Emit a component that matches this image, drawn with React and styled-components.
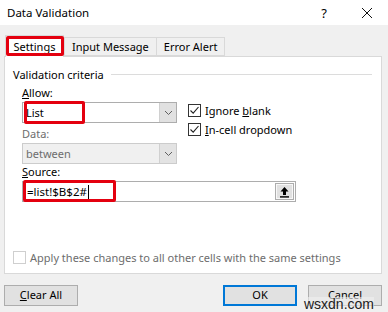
import React from 'react';
import styled, { createGlobalStyle } from 'styled-components';

const GlobalStyle = createGlobalStyle`
    body {
        margin: 0;
        font-family: "Noto Sans", "Open Sans", sans-serif;
        font-size: 11px;
        color: #000;
    }
`

function Chevron(){
    return(
        <svg width="9" height="6" viewBox="0 0 9 6">
            <path d="M1 1 L4.5 4.5 L8 1" fill="none" stroke="#606060" strokeWidth="1"/>
        </svg>
    )
}

function Tick(){
    return(
        <svg width="11" height="11" viewBox="0 0 11 11">
            <path d="M1.5 5.5 L4.2 8.2 L9.5 2" fill="none" stroke="#222" strokeWidth="1.1"/>
        </svg>
    )
}

function Check(props){
    return(
        <CheckRow disabled={props.disabled}>
            <Box disabled={props.disabled}>{props.checked && <Tick/>}</Box>
            <span>{props.children}</span>
        </CheckRow>
    )
}

function Select(props){
    return(
        <SelectBox disabled={props.disabled}>
            <SelectText>{props.value}</SelectText>
            <DropButton disabled={props.disabled}><Chevron/></DropButton>
            {props.marked && <Mark/>}
        </SelectBox>
    )
}

export default class App extends React.Component
{
    render()
    {
        return(
            <Window>
            <GlobalStyle/>

            <TitleBar>
                <Title>Data Validation</Title>
                <Help>?</Help>
                <Close>
                    <svg width="12" height="12" viewBox="0 0 12 12">
                        <path d="M1 1 L11 11 M11 1 L1 11" stroke="#111" strokeWidth="1"/>
                    </svg>
                </Close>
            </TitleBar>

            <TabRow>
                <Tab selected>Settings<TabMark/></Tab>
                <Tab>Input Message</Tab>
                <Tab>Error Alert</Tab>
            </TabRow>

            <Panel>
                <GroupHeader>Validation criteria</GroupHeader>

                <Criteria>
                    <Label><u>A</u>llow:</Label>
                    <Select value="List" marked/>
                    <Label disabled>Data:</Label>
                    <Select value="between" disabled/>

                    <Options>
                        <Check checked>Ignore <u>b</u>lank</Check>
                        <Check checked><u>I</u>n-cell dropdown</Check>
                    </Options>
                </Criteria>

                <Label><u>S</u>ource:</Label>
                <SourceBox>
                    <SourceText>=list!$B$2#<Caret/></SourceText>
                    <Mark wide/>
                    <PickButton>
                        <svg width="11" height="12" viewBox="0 0 11 12">
                            <path d="M5.5 1 L1.5 5.5 H4 V9 H7 V5.5 H9.5 Z" fill="#000"/>
                            <rect x="1" y="10.2" width="9" height="1.4" fill="#000"/>
                        </svg>
                    </PickButton>
                </SourceBox>

                <ApplyRow>
                    <Check disabled>Apply these changes to all other cells with the same settings</Check>
                </ApplyRow>
            </Panel>

            <Footer>
                <Button><u>C</u>lear All</Button>
                <Spacer/>
                <Button primary>OK</Button>
                <Button>Cancel</Button>
            </Footer>

            <Watermark>wsxdn.com</Watermark>
            </Window>
        )
    }
}

const Window = styled.div`
    position: relative;
    width: 388px;
    height: 312px;
    background: #f0f0f0;
    display: flex;
    flex-direction: column;
    overflow: hidden;
`

const TitleBar = styled.div`
    height: 25px;
    background: #fff;
    display: flex;
    align-items: center;
    padding-left: 7px;
`

const Title = styled.div`
    flex: 1;
    font-size: 11.5px;
`

const Help = styled.div`
    width: 14px;
    font-size: 13px;
    text-align: center;
    margin-right: 30px;
`

const Close = styled.div`
    width: 12px;
    height: 12px;
    margin-right: 15px;
    display: flex;
`

const TabRow = styled.div`
    display: flex;
    align-items: flex-end;
    height: 22px;
    margin-top: 9px;
    padding-left: 5px;
    position: relative;
    z-index: 1;
`

const Tab = styled.div`
    position: relative;
    height: ${p => p.selected ? '22px' : '19px'};
    width: ${p => p.selected ? '59px' : 'auto'};
    padding: 0 ${p => p.selected ? '0' : '7px'};
    justify-content: center;
    display: flex;
    align-items: center;
    box-sizing: border-box;
    background: ${p => p.selected ? '#fff' : '#f0f0f0'};
    border: 1px solid #d9d9d9;
    border-bottom: ${p => p.selected ? 'none' : '1px solid #d9d9d9'};
    margin-right: ${p => p.selected ? '0' : '-1px'};
    margin-bottom: ${p => p.selected ? '-1px' : '0'};
`

const Mark = styled.div`
    position: absolute;
    left: ${p => p.wide ? '0' : '1px'};
    top: -2px;
    width: ${p => p.wide ? '93px' : '61px'};
    height: ${p => p.wide ? '22px' : '23px'};
    box-sizing: border-box;
    border: 3px solid #e4000f;
    border-radius: 2px;
    pointer-events: none;
`

const TabMark = styled(Mark)`
    left: 0;
    top: 0;
    width: 58px;
    height: 20px;
`

const Panel = styled.div`
    position: relative;
    height: 218px;
    margin: 0 6px 0 4px;
    background: #fff;
    border: 1px solid #d9d9d9;
    box-sizing: border-box;
    padding: 9px 0 0 17px;
    display: flex;
    flex-direction: column;
`

const GroupHeader = styled.div`
    display: flex;
    align-items: center;
    height: 16px;
    margin-left: -9px;
    margin-right: 9px;
    &::after{
        content: "";
        flex: 1;
        height: 1px;
        background: #dcdcdc;
        margin-left: 7px;
    }
`

const Criteria = styled.div`
    display: grid;
    grid-template-columns: 155px 1fr;
    column-gap: 11px;
    margin-top: 3px;
`

const Label = styled.div`
    grid-column: 1;
    height: 16px;
    line-height: 16px;
    margin-bottom: 1px;
    margin-top: ${p => p.disabled ? '3px' : '0'};
    color: ${p => p.disabled ? '#6d6d6d' : '#000'};
    & + & { margin-top: 3px; }
`

const SelectBox = styled.div`
    grid-column: 1;
    position: relative;
    height: 21px;
    box-sizing: border-box;
    display: flex;
    background: ${p => p.disabled ? '#f0f0f0' : '#fff'};
    border: 1px solid ${p => p.disabled ? '#cccccc' : '#adadad'};
    color: ${p => p.disabled ? '#6d6d6d' : '#000'};
`

const SelectText = styled.div`
    flex: 1;
    padding-left: 3px;
    line-height: 19px;
`

const DropButton = styled.div`
    width: 16px;
    display: flex;
    align-items: center;
    justify-content: center;
    background: ${p => p.disabled ? '#e3e3e3' : '#e1e1e1'};
    border-left: 1px solid #d0d0d0;
`

const Options = styled.div`
    grid-column: 2;
    grid-row: 2 / span 3;
    align-self: start;
    margin-top: -1px;
`

const CheckRow = styled.div`
    display: flex;
    align-items: center;
    height: 19px;
    gap: 4px;
    color: ${p => p.disabled ? '#6d6d6d' : '#000'};
`

const Box = styled.div`
    width: 13px;
    height: 13px;
    box-sizing: border-box;
    border: 1px solid ${p => p.disabled ? '#cfcfcf' : '#333'};
    background: #fff;
    display: flex;
    align-items: center;
    justify-content: center;
`

const SourceBox = styled.div`
    position: relative;
    width: 274px;
    height: 21px;
    box-sizing: border-box;
    border: 1px solid #adadad;
    display: flex;
    align-items: center;
`

const SourceText = styled.div`
    flex: 1;
    padding-left: 4px;
    display: flex;
    align-items: center;
    font-size: 11.5px;
`

const Caret = styled.span`
    display: inline-block;
    width: 1px;
    height: 14px;
    background: #000;
    margin-left: 1px;
`

const PickButton = styled.div`
    width: 19px;
    height: 17px;
    margin-right: 1px;
    box-sizing: border-box;
    border: 1px solid #adadad;
    box-shadow: inset 0 0 0 1px #f8f8f8;
    background: #e1e1e1;
    display: flex;
    align-items: center;
    justify-content: center;
`

const ApplyRow = styled.div`
    margin-top: 46px;
    margin-left: -9px;
`

const Footer = styled.div`
    display: flex;
    gap: 11px;
    margin-top: 11px;
    padding: 0 6px 0 4px;
`

const Spacer = styled.div`
    flex: 1;
`

const Button = styled.div`
    width: 74px;
    height: 21px;
    box-sizing: border-box;
    background: #e1e1e1;
    border: ${p => p.primary ? '2px solid #0078d7' : '1px solid #adadad'};
    display: flex;
    align-items: center;
    justify-content: center;
    padding-bottom: 2px;
`

const Watermark = styled.div`
    position: absolute;
    right: 14px;
    bottom: 0;
    line-height: 15px;
    font-family: "Liberation Sans", sans-serif;
    font-size: 14px;
    color: #222;
    background: rgba(240,240,240,0.6);
`
